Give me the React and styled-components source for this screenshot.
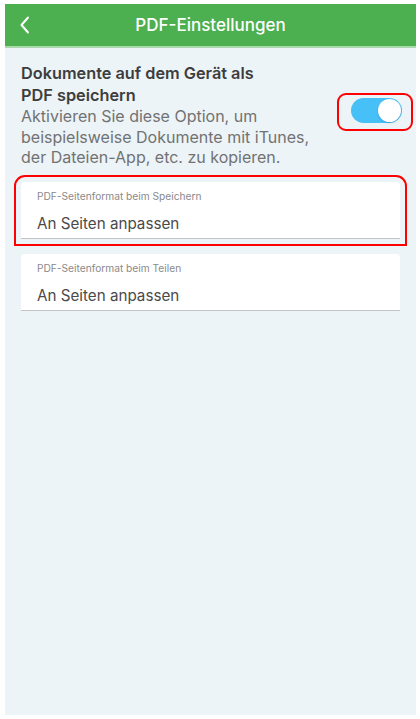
import React from 'react';
import styled, { createGlobalStyle } from 'styled-components';

const GlobalStyle = createGlobalStyle`
  html, body {
    margin: 0;
    padding: 0;
    background: #ffffff;
    font-family: Inter, "Open Sans", "Liberation Sans", sans-serif;
  }
`;

const Frame = styled.div`
  margin: 4px 4px 4px 5px;
  width: 411px;
  height: 711px;
  background: #ecf4f8;
  display: flex;
  flex-direction: column;
`;

const Header = styled.header`
  height: 42px;
  background: #4caf50;
  border-bottom: 2px solid #a9d8ab;
  display: flex;
  align-items: center;
  justify-content: center;
  position: relative;
`;

const BackButton = styled.button`
  position: absolute;
  left: 8px;
  top: 50%;
  transform: translateY(-50%);
  border: 0;
  background: none;
  padding: 0;
  width: 24px;
  height: 24px;
  display: flex;
  align-items: center;
  justify-content: center;
`;

const Title = styled.h1`
  margin: 0;
  color: #ffffff;
  font-size: 17px;
  font-weight: 500;
`;

const Content = styled.main`
  padding: 14px 16px 0 16px;
  display: flex;
  flex-direction: column;
`;

const OptionRow = styled.div`
  display: flex;
  align-items: center;
  justify-content: space-between;
`;

const OptionText = styled.div`
  display: flex;
  flex-direction: column;
`;

const OptionTitle = styled.div`
  font-size: 16.3px;
  font-weight: 600;
  color: #3d3d3d;
  line-height: 22px;
`;

const OptionDescription = styled.div`
  font-size: 16px;
  color: #727272;
  line-height: 20.5px;
`;

const ToggleWrap = styled.div`
  margin-right: -13px;
  margin-top: -6px;
  padding: 3px 9px 6px 12px;
  border: 2.5px solid #ff0000;
  border-radius: 9px;
  display: flex;
`;

const Track = styled.div`
  width: 51px;
  height: 25px;
  border-radius: 13px;
  background: ${p => (p.$on ? '#47bff7' : '#d0d0d0')};
  display: flex;
  align-items: center;
  justify-content: ${p => (p.$on ? 'flex-end' : 'flex-start')};
  padding: 0 1px;
  box-sizing: border-box;
`;

const Knob = styled.div`
  width: 23px;
  height: 23px;
  border-radius: 50%;
  background: #ffffff;
  box-shadow: 0 1px 2px rgba(0, 0, 0, 0.15);
`;

const Cards = styled.div`
  margin-top: 14px;
  display: flex;
  flex-direction: column;
  gap: 15px;
`;

const Card = styled.div`
  background: #ffffff;
  border-radius: 4px 4px 0 0;
  border-bottom: 1px solid #c4c4c4;
  padding: 8px 16px 4px;
  display: flex;
  flex-direction: column;
  gap: 11px;
  outline: ${p => (p.$highlight ? '2.5px solid #ff0000' : 'none')};
  outline-offset: 5px;
`;

const CardLabel = styled.div`
  font-size: 10.2px;
  color: #8a8a8a;
  line-height: 13px;
`;

const CardValue = styled.div`
  font-size: 15.2px;
  color: #4a4a4a;
  line-height: 20px;
`;

const ChevronLeft = () => (
  <svg width="14" height="20" viewBox="0 0 14 20" fill="none">
    <path d="M10 2.5 L3.5 10 L10 17.5" stroke="#ffffff" strokeWidth="2" strokeLinecap="round" strokeLinejoin="round" />
  </svg>
);

const settings = [
  { label: 'PDF-Seitenformat beim Speichern', value: 'An Seiten anpassen', highlight: true },
  { label: 'PDF-Seitenformat beim Teilen', value: 'An Seiten anpassen', highlight: false },
];

const App = () => (
  <>
    <GlobalStyle />
    <Frame>
      <Header>
        <BackButton aria-label="Zurück">
          <ChevronLeft />
        </BackButton>
        <Title>PDF-Einstellungen</Title>
      </Header>
      <Content>
        <OptionRow>
          <OptionText>
            <OptionTitle>
              Dokumente auf dem Gerät als<br />PDF speichern
            </OptionTitle>
            <OptionDescription>
              Aktivieren Sie diese Option, um<br />
              beispielsweise Dokumente mit iTunes,<br />
              der Dateien-App, etc. zu kopieren.
            </OptionDescription>
          </OptionText>
          <ToggleWrap>
            <Track $on>
              <Knob />
            </Track>
          </ToggleWrap>
        </OptionRow>
        <Cards>
          {settings.map(s => (
            <Card key={s.label} $highlight={s.highlight}>
              <CardLabel>{s.label}</CardLabel>
              <CardValue>{s.value}</CardValue>
            </Card>
          ))}
        </Cards>
      </Content>
    </Frame>
  </>
);

export default App;
